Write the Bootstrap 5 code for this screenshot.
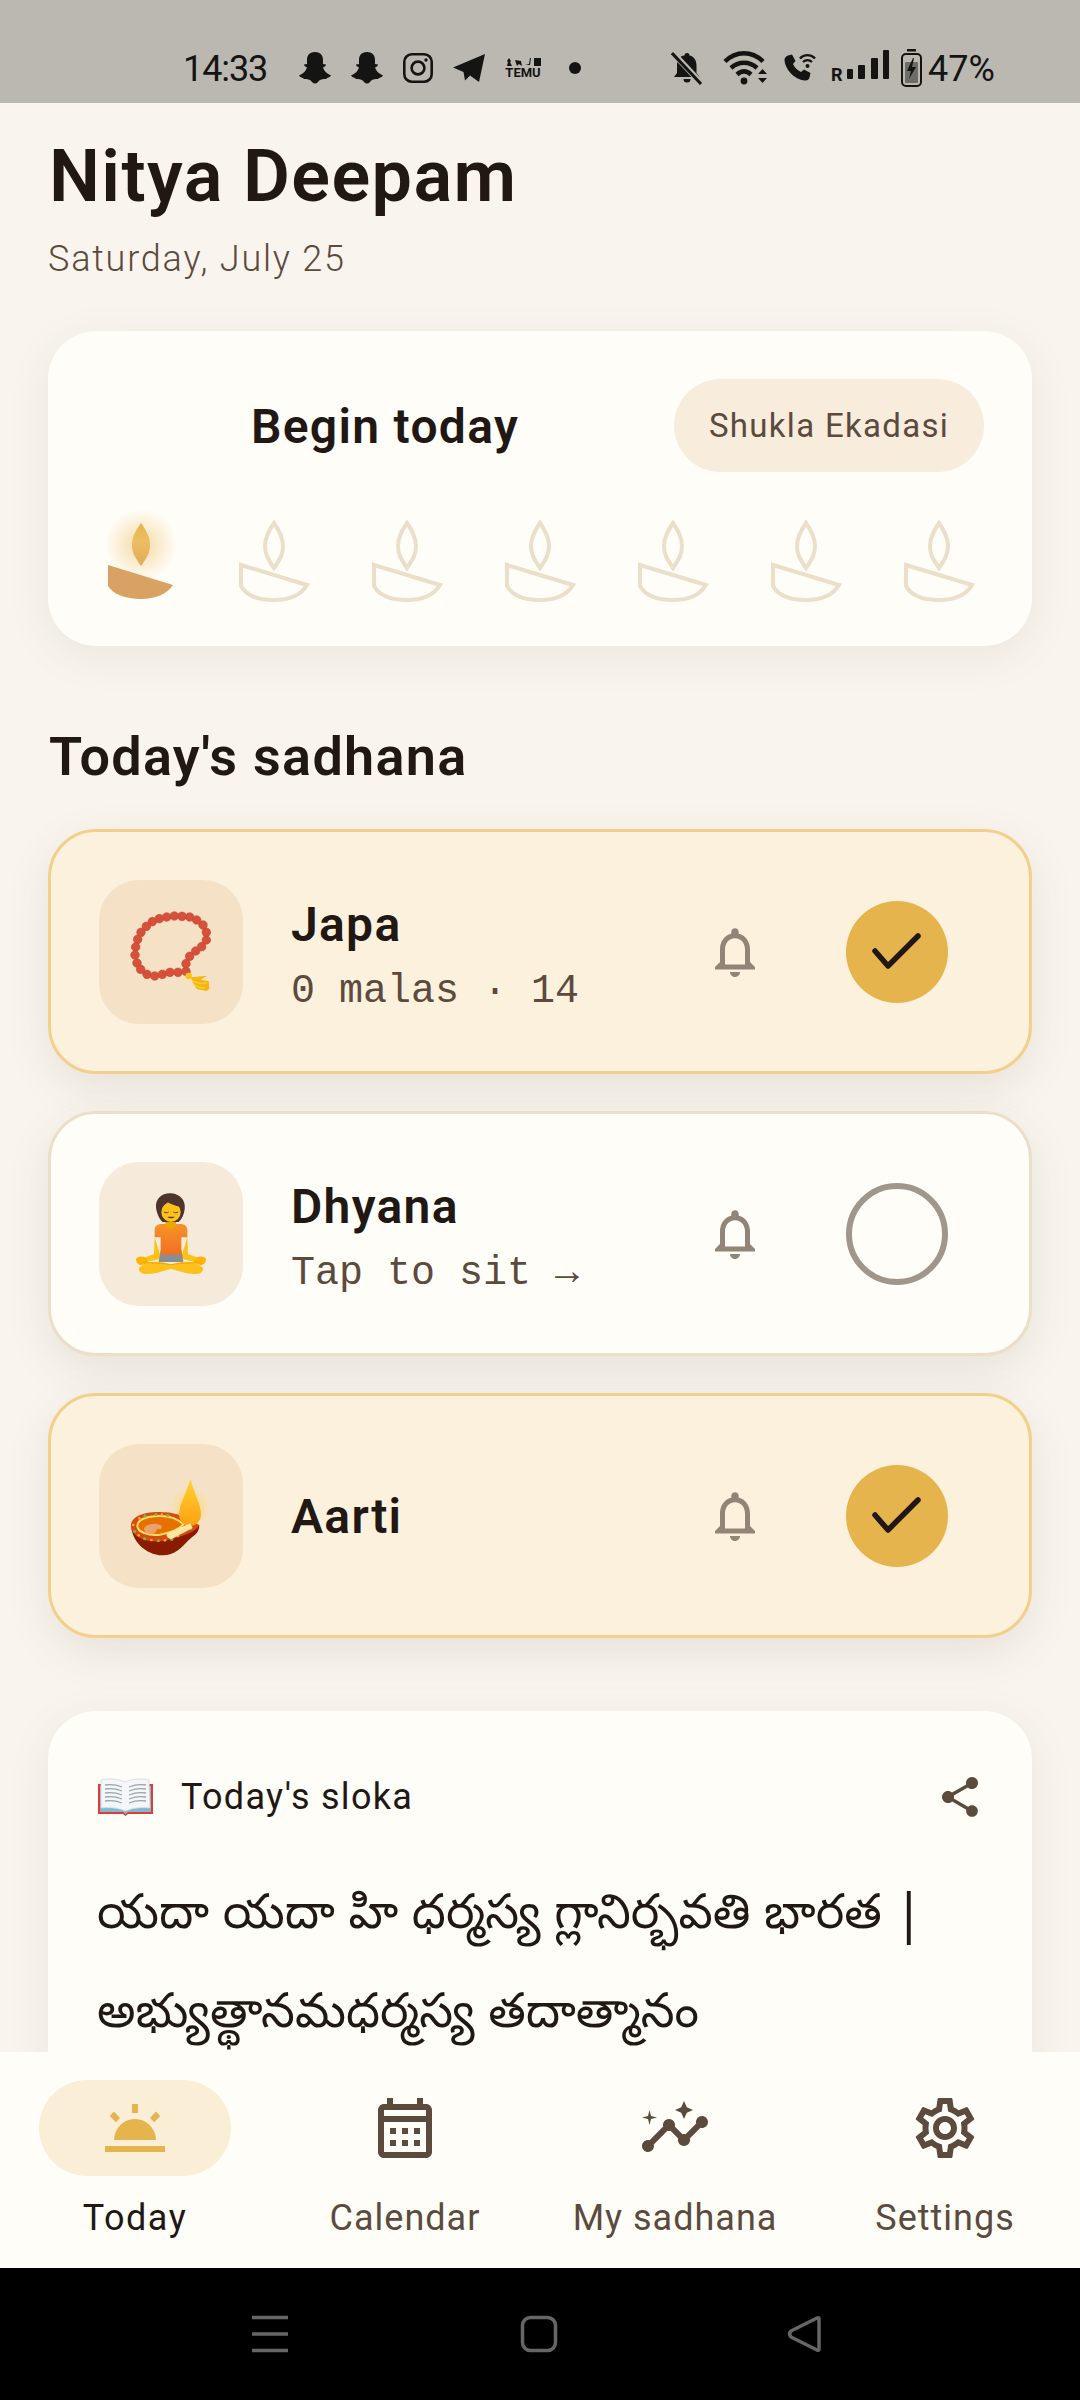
<!DOCTYPE html>
<html lang="en">
<head>
    <meta charset="UTF-8">
    <meta name="viewport" content="width=device-width, initial-scale=1.0">
    <title>Nitya Deepam</title>
    <link href="https://cdn.jsdelivr.net/npm/bootstrap@5.3.3/dist/css/bootstrap.min.css" rel="stylesheet">
    <style>
        html, body { margin: 0; height: 2400px; overflow: hidden; }
        body { background: #f9f5ee; font-family: "Roboto", "Noto Sans", sans-serif; color: #211814; }
        .phone { width: 1080px; height: 2400px; }

        /* status bar */
        .status-bar { height: 103px; flex: none; background: #bab8b1; padding: 33px 0 0 183px; color: #141512; font-size: 36px; }
        .status-bar svg { display: block; flex: none; }
        .sb-time { width: 84px; letter-spacing: -1.1px; margin-right: 32px; white-space: nowrap; padding-top: 2px; }
        .sb-left { gap: 20px; }
        .sb-dot { width: 12px; height: 12px; border-radius: 50%; background: #141512; margin-left: 8px; }
        .sb-right { margin-left: 90px; }
        .sb-m20 { margin-left: 20px; }
        .sb-m16 { margin-left: 16px; }
        .sb-m15 { margin-left: 15px; }
        .sb-m5 { margin-left: 5px; }
        .sb-m11 { margin-left: 11px; }
        .sb-pct { margin-left: 6px; letter-spacing: 0; padding-top: 2px; }
        .temu-box { width: 36px; line-height: 1; }
        .temu-txt { font-size: 13px; font-weight: 700; letter-spacing: 0; }

        /* page */
        .page { min-height: 0; overflow: hidden; padding: 31px 48px 0; }
        .app-title { font-size: 72px; line-height: 86px; font-weight: 600; margin: 0 0 17px 1px; letter-spacing: 1.4px; }
        .app-date { font-size: 36px; line-height: 44px; color: #5c4a3c; margin: 0 0 50px; letter-spacing: 1.8px; font-weight: 300; }

        .soft-card { background: #fffdf8; border-radius: 48px; box-shadow: 0 10px 44px rgba(70, 50, 30, .08); }
        .begin-card { padding: 48px 48px 41px; height: 315px; margin-bottom: 80px; }
        .begin-title { font-size: 48px; line-height: 58px; font-weight: 600; letter-spacing: 1.3px; padding-top: 3px; }
        .tithi-pill { width: 310px; height: 93px; background: #f8ecdd; color: #5c4a3c; font-size: 33px; letter-spacing: 1.3px; }
        .diya-row { margin-top: 43px; padding: 0 5px; }
        .diya-row svg { overflow: visible; display: block; }

        .section-title { font-size: 54px; line-height: 62px; font-weight: 600; margin: 0 0 41px 1px; letter-spacing: 1.3px; }

        .task-card { height: 245px; margin-bottom: 37px; padding: 0 81px 0 48px; border: 3px solid #ebdfca; border-radius: 48px; background: #fffdf8; box-shadow: 0 14px 44px rgba(70, 50, 30, .10); }
        .task-card.task-done { background: #fcf1dd; border-color: #f2d08b; }
        .task-icon { width: 144px; height: 144px; border-radius: 40px; background: #f6eadb; flex: none; margin-right: 48px; }
        .task-done .task-icon { background: #f5e2c6; }
        .task-name { font-size: 48px; line-height: 58px; font-weight: 600; letter-spacing: 1.3px; padding-top: 3px; box-sizing: content-box; }
        .task-sub { font-family: "Liberation Mono", monospace; font-size: 40px; line-height: 48px; margin: 14px 0 -6px; color: #5c4a3c; }
        .task-bell { width: 60px; height: 60px; margin-right: 81px; flex: none; fill: #928577; }
        .task-check { width: 102px; height: 102px; border-radius: 50%; flex: none; }
        .task-check.is-done { background: #e6b44c; }
        .task-check.is-open { border: 6px solid #a1968c; }

        .sloka-card { margin-top: 73px; padding: 62px 50px 0; height: 700px; }
        .sloka-book { margin-right: 28px; flex: none; }
        .sloka-label { font-size: 36px; line-height: 48px; font-weight: 400; letter-spacing: 1.3px; }
        .sloka-share { fill: #5c4a3c; margin-right: -2px; }
        .sloka-text { margin: 48px 0 0 -1px; font-family: "Noto Sans Telugu", "Noto Sans", sans-serif; font-size: 48.2px; line-height: 99px; }

        /* bottom nav */
        .bottom-nav { height: 216px; flex: none; background: #fffdf8; position: relative; }
        .nav-cell { width: 270px; padding-top: 28px; color: #5c4a3c; font-size: 36px; line-height: 44px; letter-spacing: 1px; }
        .nav-cell.is-active { color: #211814; font-weight: 400; letter-spacing: 1.5px; }
        .nav-ico { width: 192px; height: 96px; border-radius: 48px; margin-bottom: 20px; fill: #5c4a3c; }
        .is-active .nav-ico { background: #fbeed6; fill: #e6b44c; }

        .sys-bar { height: 132px; flex: none; background: #000; padding-top: 0; }
        .sys-bar svg { display: block; }
    </style>
</head>
<body>
    <div class="phone d-flex flex-column">

        <!-- status bar -->
        <div class="status-bar d-flex align-items-center">
            <div class="sb-time">14:33</div>
            <div class="d-flex align-items-center sb-left">
                <svg width="32" height="32" viewBox="0 0 32 32" fill="#141512"><path d="M16 0C10 0 8 4 8 8v4l-3 .5c0 1.500 2 2.500 3 3C7 19 4 22 0 23.500c1 2 4 2 5 3.500 3 0 6 0 8 3 2 2 4 2 6 0 2-3 5-3 8-3 1-1.500 4-1.500 5-3.500-4-1.500-7-4.500-8-8 1-.5 3-1.500 3-3l-3-.5V8c0-4-2-8-8-8z"/></svg>
                <svg width="32" height="32" viewBox="0 0 32 32" fill="#141512"><path d="M16 0C10 0 8 4 8 8v4l-3 .5c0 1.500 2 2.500 3 3C7 19 4 22 0 23.500c1 2 4 2 5 3.500 3 0 6 0 8 3 2 2 4 2 6 0 2-3 5-3 8-3 1-1.500 4-1.500 5-3.500-4-1.500-7-4.500-8-8 1-.5 3-1.500 3-3l-3-.5V8c0-4-2-8-8-8z"/></svg>
                <svg width="30" height="30" viewBox="0 0 30 30" fill="none" stroke="#141512" stroke-width="2.600"><rect x="1.300" y="1.300" width="27.400" height="27.400" rx="7.500"/><circle cx="15" cy="15" r="6.400"/><circle cx="23" cy="7" r="1.700" fill="#141512" stroke="none"/></svg>
                <svg width="32" height="28" viewBox="0 0 32 28" fill="#141512"><path d="M32 0 26 28l-9-6.500-5 5-1.500-8.500L0 13.500z"/></svg>
                <div class="temu-box text-center">
                    <svg width="36" height="8" viewBox="0 0 36 8" fill="#141512"><path d="M2 8l1-4-1-1 2-3 2 3-1 1 2 4zM10 2l6 1 1 5-3-2-2 2zM20 7l4-1 1-6h1l-1 7zM29 0h7v8h-7z"/></svg>
                    <div class="temu-txt">TEMU</div>
                </div>
                <div class="sb-dot"></div>
            </div>
            <div class="d-flex align-items-center sb-right">
                <svg width="32" height="34" viewBox="0 0 32 34" fill="#141512"><path d="M16 2a2.500 2.500 0 0 1 2.500 2.500c5 1 7 5.500 7 10V22l3 4H3l3-4v-7.500c0-5 2-9.500 7.500-10A2.500 2.500 0 0 1 16 2zM12.500 28h7a3.500 3.500 0 0 1-7 0z"/><path d="M1 1l30 32" stroke="#bab8b1" stroke-width="6"/><path d="M1 2l29 31" stroke="#141512" stroke-width="3"/></svg>
                <svg class="sb-m20" width="44" height="36" viewBox="0 0 44 36" fill="none" stroke="#141512" stroke-width="4.500"><path d="M2 11.500c11-11 27-11 38 0"/><path d="M8 18c7.500-7 18.500-7 26 0"/><path d="M14 24.500c4.500-4 9.500-4 14 0"/><circle cx="21" cy="31" r="3.400" fill="#141512" stroke="none"/><path d="M36 24l4.500-5 4.500 5zM36 28l4.500 5 4.500-5z" fill="#141512" stroke="none" transform="translate(-1 0)"/></svg>
                <svg class="sb-m16" width="33" height="30" viewBox="0 0 33 30" fill="#141512"><path d="M5 2.500l4-1 3.500 6.500-2.500 3c1.500 3.500 4.500 6.500 8 8l3-2.500 6.500 3.500-1 4.500c-.5 2-2.500 3.500-4.500 3C11 26.500 2 16 1.500 7c0-2 1.500-4 3.500-4.500z"/><path d="M17 5.500c4-4.500 11-4.500 15 0M20 9c2.500-2.500 6.500-2.500 9 0" fill="none" stroke="#141512" stroke-width="2.400"/><circle cx="24.500" cy="13" r="2"/></svg>
                <svg class="sb-m15" width="59" height="36" viewBox="0 0 59 36" fill="#141512"><text x="0" y="31" font-family="Roboto, sans-serif" font-weight="700" font-size="18">R</text><rect x="16" y="19" width="6" height="10" rx="1"/><rect x="27" y="15" width="7" height="14" rx="1"/><rect x="40" y="8" width="7" height="21" rx="1"/><rect x="52" y="0" width="6" height="29" rx="1"/></svg>
                <svg class="sb-m11" width="21" height="38" viewBox="0 0 21 38" fill="none" stroke="#141512" stroke-width="2"><rect x="6" y="0" width="9" height="2.500" fill="#141512" stroke="none"/><rect x="1" y="5" width="19" height="32" rx="4"/><rect x="4" y="13" width="13" height="21" rx="1" stroke="none" fill="#6d6c66"/><path d="M12 9 6 22h4l-2 8 7-12h-4l2-9z" fill="#141512" stroke="none"/></svg>
                <div class="sb-pct">47%</div>
            </div>
        </div>

        <div class="page flex-grow-1">
            <h1 class="app-title">Nitya Deepam</h1>
            <p class="app-date">Saturday, July 25</p>

            <!-- today card -->
            <div class="soft-card begin-card">
                <div class="d-flex align-items-center">
                    <div class="begin-title flex-grow-1 text-center">Begin today</div>
                    <div class="tithi-pill rounded-pill d-flex align-items-center justify-content-center">Shukla Ekadasi</div>
                </div>
                <div class="diya-row d-flex justify-content-between">
                    <svg width="80" height="90" viewBox="0 0 80 90">
                        <defs>
                            <radialGradient id="glow"><stop offset="0" stop-color="#ecbd5e" stop-opacity=".55"/><stop offset=".5" stop-color="#ecbd5e" stop-opacity=".28"/><stop offset="1" stop-color="#ecbd5e" stop-opacity="0"/></radialGradient>
                            <linearGradient id="flame" x1="0" y1="0" x2="0" y2="1"><stop offset="0" stop-color="#e6b34e"/><stop offset=".4" stop-color="#ecbe62"/><stop offset="1" stop-color="#e2ab58"/></linearGradient>
                        </defs>
                        <circle cx="40" cy="30" r="36" fill="url(#glow)"/>
                        <path d="M40 8C47 18 49 24 49 30C49 37 47 41 40 51C33 41 31 37 31 30C31 24 33 18 40 8Z" fill="url(#flame)"/>
                        <path d="M7 50L72 70C66 79 54 84 40 84C24 84 12 79 7 71Z" fill="#d9a263"/>
                    </svg>
                    <svg width="80" height="90" viewBox="0 0 80 90" fill="none" stroke="#ebdfca" stroke-width="4"><path d="M40 8C47 18 49 25 49 31C49 38 47 43 40 53C33 43 31 38 31 31C31 25 33 18 40 8Z"/><path d="M7 50L73 70C67 80 55 85 40 85C24 85 12 80 7 71Z"/></svg>
                    <svg width="80" height="90" viewBox="0 0 80 90" fill="none" stroke="#ebdfca" stroke-width="4"><path d="M40 8C47 18 49 25 49 31C49 38 47 43 40 53C33 43 31 38 31 31C31 25 33 18 40 8Z"/><path d="M7 50L73 70C67 80 55 85 40 85C24 85 12 80 7 71Z"/></svg>
                    <svg width="80" height="90" viewBox="0 0 80 90" fill="none" stroke="#ebdfca" stroke-width="4"><path d="M40 8C47 18 49 25 49 31C49 38 47 43 40 53C33 43 31 38 31 31C31 25 33 18 40 8Z"/><path d="M7 50L73 70C67 80 55 85 40 85C24 85 12 80 7 71Z"/></svg>
                    <svg width="80" height="90" viewBox="0 0 80 90" fill="none" stroke="#ebdfca" stroke-width="4"><path d="M40 8C47 18 49 25 49 31C49 38 47 43 40 53C33 43 31 38 31 31C31 25 33 18 40 8Z"/><path d="M7 50L73 70C67 80 55 85 40 85C24 85 12 80 7 71Z"/></svg>
                    <svg width="80" height="90" viewBox="0 0 80 90" fill="none" stroke="#ebdfca" stroke-width="4"><path d="M40 8C47 18 49 25 49 31C49 38 47 43 40 53C33 43 31 38 31 31C31 25 33 18 40 8Z"/><path d="M7 50L73 70C67 80 55 85 40 85C24 85 12 80 7 71Z"/></svg>
                    <svg width="80" height="90" viewBox="0 0 80 90" fill="none" stroke="#ebdfca" stroke-width="4"><path d="M40 8C47 18 49 25 49 31C49 38 47 43 40 53C33 43 31 38 31 31C31 25 33 18 40 8Z"/><path d="M7 50L73 70C67 80 55 85 40 85C24 85 12 80 7 71Z"/></svg>
                </div>
            </div>

            <h2 class="section-title">Today's sadhana</h2>

            <!-- Japa -->
            <div class="task-card task-done d-flex align-items-center">
                <div class="task-icon">
                    <svg width="144" height="144" viewBox="27 30 432 432">
                        <g fill="#d9503a" stroke="#b8432c" stroke-width="1.500">
                            <circle cx="171" cy="313" r="13"/><circle cx="194" cy="318" r="13"/><circle cx="217" cy="313" r="13"/><circle cx="240" cy="307" r="13"/><circle cx="264" cy="307" r="13"/><circle cx="288" cy="304" r="13"/><circle cx="288" cy="281" r="13"/><circle cx="299" cy="259" r="13"/><circle cx="317" cy="243" r="13"/><circle cx="335" cy="230" r="13"/><circle cx="349" cy="210" r="13"/><circle cx="349" cy="187" r="13"/><circle cx="339" cy="165" r="13"/><circle cx="320" cy="150" r="13"/><circle cx="299" cy="141" r="13"/><circle cx="276" cy="139" r="13"/><circle cx="253" cy="138" r="13"/><circle cx="230" cy="141" r="13"/><circle cx="208" cy="146" r="13"/><circle cx="187" cy="155" r="13"/><circle cx="169" cy="169" r="13"/><circle cx="153" cy="187" r="13"/><circle cx="143" cy="208" r="13"/><circle cx="137" cy="231" r="13"/><circle cx="135" cy="255" r="13"/><circle cx="141" cy="279" r="13"/><circle cx="152" cy="298" r="13"/>
                        </g>
                        <path d="M302 322l50-5-20 12 24 4 2 24-8 6-30-6-12-20z" fill="#f5b70f"/>
                        <path d="M306 332c15 8 30 10 44 6M308 342c12 8 24 12 36 12" fill="none" stroke="#ffd84f" stroke-width="3"/>
                        <circle cx="296" cy="318" r="10" fill="#fcc21b"/>
                    </svg>
                </div>
                <div class="flex-grow-1">
                    <div class="task-name">Japa</div>
                    <div class="task-sub">0 malas · 14</div>
                </div>
                <svg class="task-bell" viewBox="0 0 24 24"><path d="M12 22c1.100 0 2-.9 2-2h-4c0 1.100.9 2 2 2zm6-6v-5c0-3.070-1.630-5.640-4.500-6.320V4c0-.83-.67-1.500-1.500-1.500s-1.500.67-1.500 1.500v.68C7.640 5.360 6 7.920 6 11v5l-2 2v1h16v-1l-2-2zm-2 1H8v-6c0-2.480 1.510-4.500 4-4.500s4 2.020 4 4.500v6z"/></svg>
                <div class="task-check is-done d-flex align-items-center justify-content-center">
                    <svg width="52" height="42" viewBox="0 0 52 42" fill="none" stroke="#211814" stroke-width="5.500" stroke-linecap="round" stroke-linejoin="round"><path d="M4 20l13 15L47 5"/></svg>
                </div>
            </div>

            <!-- Dhyana -->
            <div class="task-card d-flex align-items-center">
                <div class="task-icon">
                    <svg width="144" height="144" viewBox="27 36 432 432">
                        <defs><linearGradient id="shirt" x1="0" y1="0" x2="0" y2="1"><stop offset="0" stop-color="#f79329"/><stop offset="1" stop-color="#f26f21"/></linearGradient></defs>
                        <path d="M194 262l-2 50-38 14 4 12 56-12zM292 262l2 50 38 14-4 12-56-12z" fill="#fcc21b"/>
                        <path d="M212 300h62l6 36h-74z" fill="#868e96"/>
                        <path d="M194 240c0-12 10-18 20-18h58c10 0 20 6 20 18v22h-18v52h-62v-52h-18z" fill="url(#shirt)"/>
                        <path d="M148 352c30-22 62-20 95-8 33-12 65-14 95 8 4 12-6 20-22 20-28 0-50-10-73-16-23 6-45 16-73 16-16 0-26-8-22-20z" fill="#fcc21b"/>
                        <path d="M138 326c8-8 22-10 32 0l6 12-22 8c-10-2-16-10-16-20zM348 326c-8-8-22-10-32 0l-6 12 22 8c10-2 16-10 16-20z" fill="#ffb300"/>
                        <path d="M160 336c30 6 60 2 83 8 23-6 53-2 83-8" fill="none" stroke="#f2a600" stroke-width="3"/>
                        <path d="M226 205h32v24l-16 8-16-8z" fill="#eaa800"/>
                        <path d="M198 172c-2-26 18-44 46-42 28 2 44 24 40 48-2 16-8 30-18 38h-48c-10-8-18-26-20-44z" fill="#4e342e"/>
                        <ellipse cx="243" cy="186" rx="29" ry="30" fill="#fcc21b"/>
                        <path d="M212 176c6-6 14-14 18-22 12 10 30 14 44 18l2-14-20-14-36 4z" fill="#4e342e"/>
                        <path d="M222 186c4 3 10 3 14 0M250 186c4 3 10 3 14 0" fill="none" stroke="#543930" stroke-width="3"/>
                        <path d="M232 200c6 6 16 6 22 0z" fill="#543930"/>
                    </svg>
                </div>
                <div class="flex-grow-1">
                    <div class="task-name">Dhyana</div>
                    <div class="task-sub">Tap to sit →</div>
                </div>
                <svg class="task-bell" viewBox="0 0 24 24"><path d="M12 22c1.100 0 2-.9 2-2h-4c0 1.100.9 2 2 2zm6-6v-5c0-3.070-1.630-5.640-4.500-6.320V4c0-.83-.67-1.500-1.500-1.500s-1.500.67-1.500 1.500v.68C7.640 5.360 6 7.920 6 11v5l-2 2v1h16v-1l-2-2zm-2 1H8v-6c0-2.480 1.510-4.500 4-4.500s4 2.020 4 4.500v6z"/></svg>
                <div class="task-check is-open"></div>
            </div>

            <!-- Aarti -->
            <div class="task-card task-done d-flex align-items-center">
                <div class="task-icon">
                    <svg width="144" height="144" viewBox="27 882 432 432">
                        <defs>
                            <radialGradient id="halo"><stop offset="0" stop-color="#ffca28" stop-opacity=".5"/><stop offset="1" stop-color="#ffca28" stop-opacity="0"/></radialGradient>
                            <linearGradient id="aflame" x1="0" y1="0" x2="0" y2="1"><stop offset="0" stop-color="#ffd235"/><stop offset="1" stop-color="#ffa010"/></linearGradient>
                        </defs>
                        <circle cx="300" cy="1070" r="60" fill="url(#halo)"/>
                        <path d="M124 1128c0 40 40 88 94 88 36 0 58-24 76-44 16-14 34-22 34-46z" fill="#8a1a00"/>
                        <path d="M123 1128c0-26 30-42 84-42 42 0 78 10 100 30l20 8c-4 16-30 26-58 36-36 12-70 18-96 12-28-6-50-22-50-44z" fill="#d84a10"/>
                        <path d="M142 1128c0-18 26-30 66-30 34 0 60 12 72 26-14 14-38 24-70 30-34 4-68-8-68-26z" fill="#e67000" stroke="#ffdf6b" stroke-width="6"/>
                        <path d="M162 1134c8-12 34-18 50-8 8 6 0 16-10 10-4 10-10 20-22 16-10-2-18-8-18-18z" fill="#e8a468"/>
                        <g fill="#7cb342"><circle cx="134" cy="1144" r="5"/><circle cx="164" cy="1166" r="5"/><circle cx="205" cy="1172" r="5"/><circle cx="245" cy="1168" r="5"/><circle cx="165" cy="1098" r="5"/><circle cx="198" cy="1093" r="5"/><circle cx="234" cy="1096" r="5"/><circle cx="302" cy="1136" r="4"/></g>
                        <g fill="#ffa726"><circle cx="130" cy="1125" r="4"/><circle cx="146" cy="1156" r="4"/><circle cx="184" cy="1170" r="4"/><circle cx="225" cy="1171" r="4"/><circle cx="264" cy="1158" r="4"/><circle cx="148" cy="1105" r="4"/><circle cx="216" cy="1094" r="4"/></g>
                        <path d="M301 986c10 40 32 78 32 106 0 20-14 36-32 36s-34-14-34-34c0-30 24-68 34-108z" fill="url(#aflame)"/>
                        <path d="M232 1150l68-30 8 14-62 32c-12 2-20-8-14-16z" fill="#ffe9a0"/>
                    </svg>
                </div>
                <div class="flex-grow-1">
                    <div class="task-name">Aarti</div>
                </div>
                <svg class="task-bell" viewBox="0 0 24 24"><path d="M12 22c1.100 0 2-.9 2-2h-4c0 1.100.9 2 2 2zm6-6v-5c0-3.070-1.630-5.640-4.500-6.320V4c0-.83-.67-1.500-1.500-1.500s-1.500.67-1.500 1.500v.68C7.640 5.360 6 7.920 6 11v5l-2 2v1h16v-1l-2-2zm-2 1H8v-6c0-2.480 1.510-4.500 4-4.500s4 2.020 4 4.500v6z"/></svg>
                <div class="task-check is-done d-flex align-items-center justify-content-center">
                    <svg width="52" height="42" viewBox="0 0 52 42" fill="none" stroke="#211814" stroke-width="5.500" stroke-linecap="round" stroke-linejoin="round"><path d="M4 20l13 15L47 5"/></svg>
                </div>
            </div>

            <!-- sloka -->
            <div class="soft-card sloka-card">
                <div class="d-flex align-items-center">
                    <svg class="sloka-book" width="55" height="38" viewBox="0 0 55 38">
                        <path d="M0 6h55v30H30l-2.500 2-2.500-2H0z" fill="#e53935"/>
                        <path d="M2 8h51v26H30l-2.500 2-2.500-2H2z" fill="#7fb8d0"/>
                        <path d="M3 2c9-2 18-1 24 2 6-3 15-4 24-2l1 28c-9-1-18 0-24.500 3C21 30 12 29 3 30z" fill="#f4f6f7" stroke="#cfd8dc" stroke-width=".8"/>
                        <path d="M7 7c6-1 12 0 17 2M7 11c6-1 12 0 17 2M7 15c6-1 12 0 17 2M7 19c6-1 12 0 17 2M7 23c6-1 12 0 17 2M48 7c-6-1-12 0-17 2M48 11c-6-1-12 0-17 2M48 15c-6-1-12 0-17 2M48 19c-6-1-12 0-17 2M48 23c-6-1-12 0-17 2" stroke="#9aa5ab" stroke-width="1.300" fill="none"/>
                    </svg>
                    <div class="sloka-label flex-grow-1">Today's sloka</div>
                    <svg class="sloka-share" width="48" height="48" viewBox="0 0 24 24"><path d="M18 16.080c-.76 0-1.440.3-1.960.77L8.910 12.700c.05-.23.09-.46.09-.7s-.04-.47-.09-.7l7.050-4.110c.54.5 1.250.81 2.040.81 1.660 0 3-1.340 3-3s-1.340-3-3-3-3 1.340-3 3c0 .24.04.47.09.7L8.040 9.810C7.500 9.310 6.790 9 6 9c-1.660 0-3 1.340-3 3s1.340 3 3 3c.79 0 1.500-.31 2.040-.81l7.120 4.160c-.05.21-.08.43-.08.65 0 1.610 1.310 2.920 2.920 2.920 1.610 0 2.920-1.310 2.920-2.920s-1.310-2.920-2.920-2.920z"/></svg>
                </div>
                <div class="sloka-text" lang="te">యదా యదా హి ధర్మస్య గ్లానిర్భవతి భారత |<br>అభ్యుత్థానమధర్మస్య తదాత్మానం</div>
            </div>
        </div>

        <!-- bottom nav -->
        <div class="bottom-nav d-flex">
            <div class="nav-cell is-active d-flex flex-column align-items-center">
                <div class="nav-ico d-flex align-items-center justify-content-center">
                    <svg width="72" height="72" viewBox="0 0 24 24"><path d="M2 18h20v2H2zM5 16a7 7 0 0 1 14 0zM11 4h2v3h-2zM3.600 8l1.400-1.500 2 2.200-1.400 1.400zM17 8.700l2-2.200 1.400 1.500-2 2.100z"/></svg>
                </div>
                <div>Today</div>
            </div>
            <div class="nav-cell d-flex flex-column align-items-center">
                <div class="nav-ico d-flex align-items-center justify-content-center">
                    <svg width="72" height="72" viewBox="0 0 24 24"><path d="M19 4h-1V2h-2v2H8V2H6v2H5c-1.100 0-2 .9-2 2v14c0 1.100.9 2 2 2h14c1.100 0 2-.9 2-2V6c0-1.100-.9-2-2-2zm0 16H5V10h14v10zm0-12H5V6h14v2zM7 12h2v2H7zm4 0h2v2h-2zm4 0h2v2h-2zM7 16h2v2H7zm4 0h2v2h-2zm4 0h2v2h-2z"/></svg>
                </div>
                <div>Calendar</div>
            </div>
            <div class="nav-cell d-flex flex-column align-items-center">
                <div class="nav-ico d-flex align-items-center justify-content-center">
                    <svg width="72" height="72" viewBox="0 0 24 24"><path d="M21 8c-1.450 0-2.260 1.440-1.930 2.510l-3.550 3.560c-.3-.09-.74-.09-1.040 0l-2.550-2.550C12.270 10.450 11.460 9 10 9c-1.450 0-2.270 1.440-1.930 2.520l-4.560 4.550C2.440 15.740 1 16.550 1 18c0 1.100.9 2 2 2 1.450 0 2.260-1.440 1.930-2.510l4.550-4.560c.3.09.74.09 1.040 0l2.550 2.550C12.730 16.550 13.540 18 15 18c1.450 0 2.270-1.440 1.930-2.520l3.560-3.550C21.560 12.260 23 11.450 23 10c0-1.100-.9-2-2-2zM15 9l.94-2.070L18 6l-2.060-.93L15 3l-.92 2.070L12 6l2.080.93zM3.500 11L4 9l2-.5L4 8l-.5-2L3 8l-2 .5L3 9z"/></svg>
                </div>
                <div>My sadhana</div>
            </div>
            <div class="nav-cell d-flex flex-column align-items-center">
                <div class="nav-ico d-flex align-items-center justify-content-center">
                    <svg width="72" height="72" viewBox="0 0 24 24"><path d="M19.430 12.980c.04-.32.07-.64.07-.98 0-.34-.03-.66-.07-.98l2.110-1.650c.19-.15.24-.42.12-.64l-2-3.460c-.09-.16-.26-.25-.44-.25-.06 0-.12.01-.17.03l-2.490 1c-.52-.4-1.080-.73-1.690-.98l-.38-2.650C14.460 2.180 14.250 2 14 2h-4c-.25 0-.46.18-.49.42l-.38 2.650c-.61.25-1.170.59-1.690.98l-2.490-1c-.06-.02-.12-.03-.18-.03-.17 0-.34.09-.43.25l-2 3.460c-.13.22-.07.49.12.64l2.110 1.650c-.04.32-.07.65-.07.98 0 .33.03.66.07.98l-2.110 1.650c-.19.15-.24.42-.12.64l2 3.460c.09.16.26.25.44.25.06 0 .12-.01.17-.03l2.490-1c.52.4 1.080.73 1.690.98l.38 2.650c.03.24.24.42.49.42h4c.25 0 .46-.18.49-.42l.38-2.650c.61-.25 1.170-.59 1.690-.98l2.490 1c.06.02.12.03.18.03.17 0 .34-.09.43-.25l2-3.460c.12-.22.07-.49-.12-.64l-2.110-1.650zm-1.980-1.710c.04.31.05.52.05.73 0 .21-.02.43-.05.73l-.14 1.130.89.7 1.080.84-.7 1.210-1.270-.51-1.040-.42-.9.68c-.43.32-.84.56-1.250.73l-1.060.43-.16 1.130-.2 1.350h-1.400l-.19-1.350-.16-1.130-1.060-.43c-.43-.18-.83-.41-1.230-.71l-.91-.7-1.060.43-1.270.51-.7-1.210 1.080-.84.89-.7-.14-1.130c-.03-.31-.05-.54-.05-.74s.02-.43.05-.73l.14-1.130-.89-.7-1.080-.84.7-1.210 1.270.51 1.040.42.9-.68c.43-.32.84-.56 1.250-.73l1.060-.43.16-1.130.2-1.350h1.390l.19 1.350.16 1.130 1.060.43c.43.18.83.41 1.230.71l.91.7 1.060-.43 1.270-.51.7 1.210-1.070.85-.89.7.14 1.130zM12 8c-2.210 0-4 1.790-4 4s1.790 4 4 4 4-1.790 4-4-1.790-4-4-4zm0 6c-1.100 0-2-.9-2-2s.9-2 2-2 2 .9 2 2-.9 2-2 2z"/></svg>
                </div>
                <div>Settings</div>
            </div>
        </div>

        <!-- android buttons -->
        <div class="sys-bar">
            <svg width="1080" height="132" viewBox="0 2268 1080 132" fill="none" stroke="#666" stroke-width="3.500">
                <path d="M252 2317.500h36M252 2334h36M252 2350.500h36"/>
                <rect x="522.500" y="2317.500" width="33" height="33" rx="8"/>
                <path d="M819 2319v30q0 2-2 1l-26-13q-3-3 0-6l26-13q2-1 2 1z" stroke-linejoin="round"/>
            </svg>
        </div>
    </div>

    <script src="https://cdn.jsdelivr.net/npm/bootstrap@5.3.3/dist/js/bootstrap.bundle.min.js"></script>
</body>
</html>
